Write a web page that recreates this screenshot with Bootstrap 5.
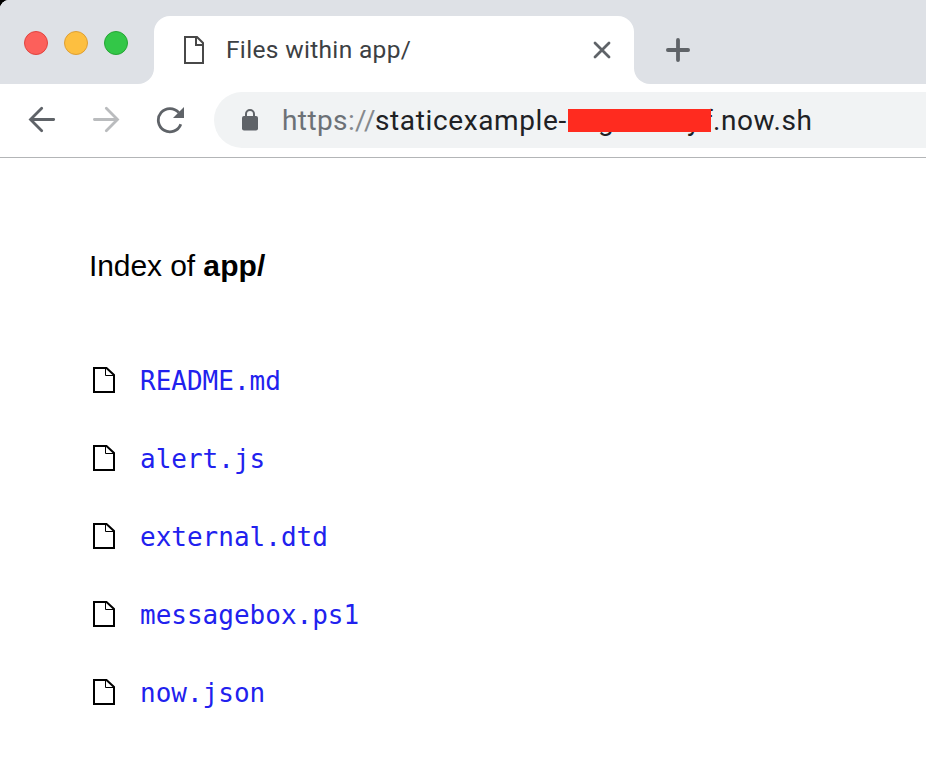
<!DOCTYPE html>
<html lang="en">
<head>
<meta charset="utf-8">
<meta name="viewport" content="width=device-width, initial-scale=1">
<title>Files within app/</title>
<link rel="stylesheet" href="https://cdn.jsdelivr.net/npm/bootstrap@5.3.0/dist/css/bootstrap.min.css">
<style>
body{background:#fff;color:#000;height:778px;overflow:hidden}
svg{display:block;flex:none}
.window-corner{background:#000}
.tab-strip{height:84px;background:#dee1e6;border-top-left-radius:9px;overflow:hidden}
.lights{width:154px;gap:16px;padding:31px 0 0 24px;border-bottom-right-radius:16px;background:#dee1e6}
.light{width:24px;height:24px;border-radius:50%;border:1px solid}
.light-close{background:#fc605b;border-color:#e0443f}
.light-min{background:#fdbf40;border-color:#de9f34}
.light-max{background:#33c748;border-color:#25a535}
.strip-base{background:linear-gradient(#dee1e6 50%,#fff 50%)}
.active-tab{width:480px;height:68px;background:#fff;border-radius:16px 16px 0 0;padding:0 22px 0 30px}
.tab-title{font:24.5px/28px Roboto,sans-serif;color:#3c4043;margin-left:22px;letter-spacing:.33px;white-space:nowrap}
.strip-rest{background:#dee1e6;border-bottom-left-radius:16px;padding:38px 0 0 32px}
.toolbar{height:74px;border-bottom:1px solid #b3b5b7;padding:8px 0 9px 28px}
.address{height:56px;background:#f1f3f4;border-radius:28px 0 0 28px;padding-left:28px;margin-left:30px}
.url{font:28px/36px Roboto,sans-serif;color:#202124;margin-left:24px;padding-top:2px;white-space:nowrap}
.scheme{color:#6c7176;width:93px;letter-spacing:.4px}
.slashes{color:#85898d}
.host{width:193px;letter-spacing:.62px}
.redacted{width:145px;height:36px}
.redacted i{font-style:normal;top:0}
.g{left:30px}.y{left:119px}.f{left:135px}
.redacted b{left:0;top:6px;width:143px;height:23px;background:#ff2b1f}
.domain{letter-spacing:.6px}
.listing{padding:90px 89px 0}
.listing h1{font:30px/36px "Liberation Sans",sans-serif;letter-spacing:-.08px;margin:0 0 83px}
.listing h1 strong{font-weight:700;letter-spacing:.1px}
.files li{height:78px;padding-left:4px}
.files a{font:26px/32px "DejaVu Sans Mono",monospace;color:#2121ee;text-decoration:none;margin:-2px 0 0 25px}
</style>
<script src="https://cdn.jsdelivr.net/npm/bootstrap@5.3.0/dist/js/bootstrap.bundle.min.js"></script>
</head>
<body>
<svg width="0" height="0" class="position-absolute"><defs>
<symbol id="file" viewBox="0 0 22 26"><path d="M1 1H13.5L21 8V25H1Z" fill="none" stroke="#000" stroke-width="2"/><path d="M12.5 1V8.5H21" fill="none" stroke="#000" stroke-width="1"/></symbol>
</defs></svg>
<header>
<div class="window-corner"><div class="tab-strip d-flex">
  <div class="strip-base flex-shrink-0"><div class="lights d-flex h-100">
    <span class="light light-close"></span><span class="light light-min"></span><span class="light light-max"></span>
  </div></div>
  <div class="strip-base flex-shrink-0 d-flex align-items-end">
    <div class="active-tab d-flex align-items-center">
      <svg width="20" height="28" viewBox="0 0 20 28" fill="none" stroke="#484848"><path d="M1 1H13L19 7V27H1Z" stroke-width="2"/><path d="M12 1V9H19" stroke-width="2"/></svg>
      <span class="tab-title">Files within app/</span>
      <svg class="ms-auto" width="20" height="20" viewBox="0 0 20 20"><path d="M3 3 17 17M17 3 3 17" stroke="#5f6368" stroke-width="2.8" stroke-linecap="round"/></svg>
    </div>
  </div>
  <div class="strip-base flex-grow-1"><div class="strip-rest h-100">
    <svg width="24" height="24" viewBox="0 0 24 24"><path d="M12 1.9V22.1M1.9 12H22.1" stroke="#5f6368" stroke-width="3.8" stroke-linecap="round"/></svg>
  </div></div>
</div></div>
<nav class="toolbar d-flex align-items-center">
  <svg width="28" height="28" viewBox="0 0 28 28" fill="none" stroke="#5f6368" stroke-width="2.8" stroke-linecap="round"><path d="M25.7 13.5H3M13.7 2.2 2.5 13.5 13.7 24.8"/></svg>
  <svg width="100" height="28" viewBox="-37 0 100 28" fill="none" stroke="#babcbe" stroke-width="2.8" stroke-linecap="round"><path d="M1.4 13.5H24M13.3 2.2 24.5 13.5 13.3 24.8"/></svg>
  <svg width="28" height="28" viewBox="0 0 28 28"><path d="M24.8 18.2A11.6 11.6 0 1 1 22.8 6.7" fill="none" stroke="#5f6368" stroke-width="2.8"/><path d="M28 1V12H17Z" fill="#5f6368"/></svg>
  <div class="address d-flex align-items-center flex-grow-1">
    <svg width="16" height="22" viewBox="0 0 16 22"><path d="M4 8V5a4 4 0 0 1 8 0V8" fill="none" stroke="#5f6368" stroke-width="2"/><rect y="7" width="16" height="14.5" rx="2" fill="#5f6368"/></svg>
    <div class="url d-flex"><span class="scheme">https<span class="slashes">://</span></span><span class="host">staticexample-</span><span class="redacted position-relative"><i class="g position-absolute">g</i><i class="y position-absolute">y</i><i class="f position-absolute">f</i><b class="position-absolute"></b></span><span class="domain">.now.sh</span></div>
  </div>
</nav>
</header>
<main class="listing">
  <h1>Index of <strong>app/</strong></h1>
  <ul class="files list-unstyled mb-0">
    <li class="d-flex align-items-start"><svg width="22" height="26"><use href="#file"/></svg><a href="#">README.md</a></li>
    <li class="d-flex align-items-start"><svg width="22" height="26"><use href="#file"/></svg><a href="#">alert.js</a></li>
    <li class="d-flex align-items-start"><svg width="22" height="26"><use href="#file"/></svg><a href="#">external.dtd</a></li>
    <li class="d-flex align-items-start"><svg width="22" height="26"><use href="#file"/></svg><a href="#">messagebox.ps1</a></li>
    <li class="d-flex align-items-start"><svg width="22" height="26"><use href="#file"/></svg><a href="#">now.json</a></li>
  </ul>
</main>
</body>
</html>
